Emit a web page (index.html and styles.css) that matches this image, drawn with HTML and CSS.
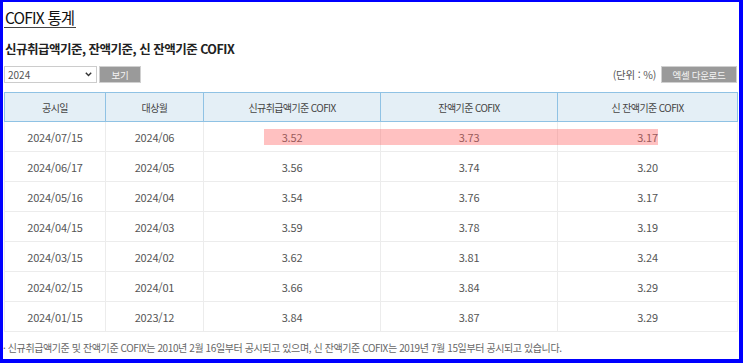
FILE: index.html
```html
<!DOCTYPE html>
<html lang="ko">
<head>
<meta charset="utf-8">
<title>COFIX 통계</title>
<link rel="stylesheet" href="styles.css">
</head>
<body>
<div class="frame">
  <div class="page">
    <h1 class="title">COFIX 통계</h1>
    <h2 class="subtitle">신규취급액기준, 잔액기준, 신 잔액기준 COFIX</h2>
    <div class="controls">
      <div class="left-controls">
        <div class="select">
          <span>2024</span>
          <svg class="chev" width="7" height="5" viewBox="0 0 7 5"><path d="M0.8 0.8 L3.5 3.6 L6.2 0.8" fill="none" stroke="#333" stroke-width="1.4"/></svg>
        </div>
        <button class="btn btn-view">보기</button>
      </div>
      <div class="right-controls">
        <span class="unit">(단위 : %)</span>
        <button class="btn btn-excel">엑셀 다운로드</button>
      </div>
    </div>
    <div class="table-wrap">
      <table class="cofix">
        <colgroup>
          <col class="c1"><col class="c2"><col class="c3"><col class="c4"><col class="c5">
        </colgroup>
        <thead>
          <tr><th>공시일</th><th>대상월</th><th>신규취급액기준 COFIX</th><th>잔액기준 COFIX</th><th>신 잔액기준 COFIX</th></tr>
        </thead>
        <tbody>
          <tr><td>2024/07/15</td><td>2024/06</td><td>3.52</td><td>3.73</td><td>3.17</td></tr>
          <tr><td>2024/06/17</td><td>2024/05</td><td>3.56</td><td>3.74</td><td>3.20</td></tr>
          <tr><td>2024/05/16</td><td>2024/04</td><td>3.54</td><td>3.76</td><td>3.17</td></tr>
          <tr><td>2024/04/15</td><td>2024/03</td><td>3.59</td><td>3.78</td><td>3.19</td></tr>
          <tr><td>2024/03/15</td><td>2024/02</td><td>3.62</td><td>3.81</td><td>3.24</td></tr>
          <tr><td>2024/02/15</td><td>2024/01</td><td>3.66</td><td>3.84</td><td>3.29</td></tr>
          <tr><td>2024/01/15</td><td>2023/12</td><td>3.84</td><td>3.87</td><td>3.29</td></tr>
        </tbody>
      </table>
      <div class="highlight"></div>
    </div>
    <p class="note">· 신규취급액기준 및 잔액기준 COFIX는 2010년 2월 16일부터 공시되고 있으며, 신 잔액기준 COFIX는 2019년 7월 15일부터 공시되고 있습니다.</p>
  </div>
</div>
</body>
</html>
```
FILE: styles.css
```css
html, body {
  margin: 0;
  padding: 0;
  background: #fff;
}
body {
  font-family: "Noto Sans CJK KR", "Noto Sans", sans-serif;
  color: #333;
}
.frame {
  width: 743px;
  height: 363px;
  box-sizing: border-box;
  border-style: solid;
  border-color: #0000ff;
  border-width: 2px 4px 4px 3px;
  overflow: hidden;
}
.page {
  padding-left: 1px;
  padding-right: 2px;
}
.title {
  display: inline-block;
  margin: 5px 0 0 0;
  font-size: 15.5px;
  font-weight: 400;
  letter-spacing: -0.8px;
  line-height: 20px;
  color: #111;
  border-bottom: 1px solid #444;
  padding: 0 2px 0 1px;
}
.subtitle {
  margin: 12px 0 0 1px;
  font-size: 12.5px;
  font-weight: 700;
  letter-spacing: -0.5px;
  line-height: 16px;
  color: #222;
}
.controls {
  margin-top: 9px;
  display: flex;
  justify-content: space-between;
  align-items: flex-start;
  height: 17px;
}
.left-controls, .right-controls {
  display: flex;
  align-items: center;
}
.select {
  width: 93px;
  height: 17px;
  box-sizing: border-box;
  border: 1px solid #ccc;
  display: flex;
  align-items: center;
  justify-content: space-between;
  padding: 0 4px 0 3px;
  font-size: 10px;
  color: #555;
  background: #fff;
}
.btn {
  font-family: inherit;
  border: 1px solid #d0d0d0;
  background: #9a9a9a;
  color: #f4f4f4;
  font-size: 9.5px;
  letter-spacing: -0.3px;
  height: 17px;
  padding: 0;
  line-height: 14px;
}
.btn-view {
  width: 42px;
  margin-left: 2px;
}
.unit {
  font-size: 10.5px;
  color: #555;
  letter-spacing: -0.2px;
  margin-right: 5px;
}
.btn-excel {
  width: 76px;
  height: 17px;
}
.table-wrap {
  position: relative;
  margin-top: 9px;
}
.cofix {
  width: 733px;
  border-collapse: collapse;
  table-layout: fixed;
}
.c1 { width: 101px; }
.c2 { width: 98px; }
.c3 { width: 177px; }
.c4 { width: 177px; }
.c5 { width: 180px; }
.cofix th {
  background: #e4eff6;
  border: 1px solid #8fc2e4;
  height: 28px;
  padding: 0;
  font-size: 10px;
  font-weight: 400;
  letter-spacing: -0.6px;
  color: #444;
}
.cofix td {
  border: 1px solid #ececec;
  height: 29px;
  padding: 0;
  text-align: center;
  font-size: 11px;
  color: #555;
  letter-spacing: -0.2px;
}
.highlight {
  position: absolute;
  left: 260px;
  top: 37px;
  width: 394px;
  height: 16px;
  background: rgba(255, 100, 100, 0.4);
}
.note {
  margin: 9px 0 0 -1px;
  font-size: 10px;
  line-height: 14px;
  color: #666;
  letter-spacing: -0.4px;
}
```
